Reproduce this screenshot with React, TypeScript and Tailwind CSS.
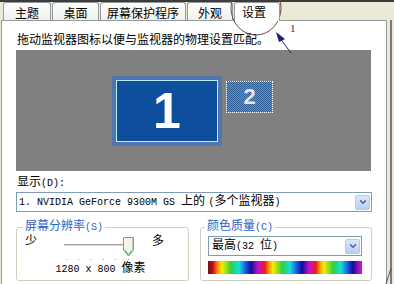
import React from 'react';
import { ChevronDown } from 'lucide-react';

const mono = "font-['Liberation_Mono','Noto_Sans_CJK_SC',monospace] text-[10px]";

const DropBtn: React.FC = () => (
  <div className="w-[15px] h-[15px] rounded-[2px] border border-[#b6c8f2] bg-[linear-gradient(#dbe6fd,#b9cdf8)] flex items-center justify-center">
    <ChevronDown className="w-[10px] h-[10px] text-[#4d6185]" strokeWidth={3.5} />
  </div>
);

const tabs = [
  { label: '主题', w: 'w-[48px]' },
  { label: '桌面', w: 'w-[47px]' },
  { label: '屏幕保护程序', w: 'w-[86px]' },
  { label: '外观', w: 'w-[46px]' },
];

export default function App() {
  return (
    <div className="relative w-[394px] h-[284px] overflow-hidden bg-[#ece9d8] flex flex-col text-[12px] text-black font-['Liberation_Sans','Noto_Sans_CJK_SC',sans-serif]">
      {/* window top edge */}
      <div className="h-[2px] bg-[#3c3c3c]" />

      {/* tab strip */}
      <div className="h-[18px] flex items-end pl-[3px]">
        {tabs.map((t) => (
          <div
            key={t.label}
            className={`${t.w} h-[18px] border-t border-l border-r border-[#919b9c] rounded-t-[3px] bg-[linear-gradient(#fefefe,#f1f0ea)] text-center pt-[5px] leading-[13px] mr-[1px]`}
          >
            {t.label}
          </div>
        ))}
        <div className="w-[46px] h-[19px] -mb-[1px] relative z-10 border-t border-l border-r border-[#919b9c] rounded-t-[3px] bg-white pl-[7px] pt-[3px] leading-[14px]">
          设置
        </div>
      </div>

      <div className="flex flex-1">
        {/* property page */}
        <div className="ml-[1px] w-[386px] bg-white border-l border-t border-r border-[#919b9c] pl-[14px] pr-[14px] pt-[12px] flex flex-col">
          <div className="leading-[14px] pl-[1px]">拖动监视器图标以便与监视器的物理设置匹配。</div>

          {/* monitor arrangement */}
          <div className="relative mt-[3px] h-[121px] w-[355px] bg-[#808080]">
            <div className="absolute left-[96px] top-[26px] w-[110px] h-[70px] bg-[#4f76ad] p-[4px]">
              <div className="w-full h-full border border-[#b8ecf8] bg-[#0d4f9c] flex items-center justify-center">
                <span className="text-white font-bold text-[50px] leading-none font-['Liberation_Sans',sans-serif]">1</span>
              </div>
            </div>
            <div className="absolute left-[210px] top-[31px] w-[47px] h-[32px] border border-dotted border-white bg-[repeating-conic-gradient(#2f5f96_0_25%,#8a8a8a_0_50%)] bg-[length:2px_2px] flex items-center justify-center">
              <span className="text-[#e2e6ee] font-bold text-[22px] leading-none font-['Liberation_Sans',sans-serif]">2</span>
            </div>
          </div>

          <div className="mt-[4px] leading-[14px] pl-[1px]">
            显示<span className={mono}>(D):</span>
          </div>

          <div className="mt-[1px] h-[20px] w-[356px] border border-[#7f9db9] flex items-center justify-between pl-[2px] pr-[1px]">
            <span className="leading-[14px] whitespace-nowrap">
              <span className={mono}>1. NVIDIA GeForce 9300M GS </span>上的 <span className={mono}>(</span>多个监视器<span className={mono}>)</span>
            </span>
            <DropBtn />
          </div>

          <div className="mt-[7px] flex gap-[11px]">
            <fieldset className="w-[173px] h-[62px] border border-[#d0d0bf] rounded-[3px] px-[8px]">
              <legend className="ml-[-2px] px-[2px] leading-[14px] text-[#2f62c6]">
                屏幕分辨率<span className={mono}>(S)</span>
              </legend>
              <div className="flex items-start">
                <span className="leading-[12px]">少</span>
                <svg width="72" height="26" className="ml-[25px] shrink-0">
                  <rect x="2" y="9" width="64" height="1" fill="#a09f98" />
                  <rect x="2" y="10" width="64" height="1" fill="#dcdcd4" />
                  {[4, 16, 28, 41, 53, 66].map((x) => (
                    <rect key={x} x={x} y="24" width="1" height="1" fill="#a0a0a0" />
                  ))}
                  <g transform="translate(61,2)">
                    <path d="M0.5 0.5 H10.5 V13 L5.5 19 L0.5 13 Z" fill="#f4f3ee" stroke="#8893a6" />
                    <path d="M1.5 13 L5.5 17.5 L9.5 13" fill="none" stroke="#3bb04c" />
                    <path d="M9.5 1.5 V12.5" stroke="#c9c9c0" />
                  </g>
                </svg>
                <span className="ml-[18px] leading-[12px]">多</span>
              </div>
              <div className="text-center leading-[14px] pr-[4px]">
                <span className={mono}>1280 x 800 </span>像素
              </div>
            </fieldset>

            <fieldset className="w-[172px] h-[62px] border border-[#d0d0bf] rounded-[3px] px-[7px]">
              <legend className="ml-[-3px] px-[2px] leading-[14px] text-[#2f62c6]">
                颜色质量<span className={mono}>(C)</span>
              </legend>
              <div className="mt-[1px] h-[20px] w-[154px] border border-[#7f9db9] flex items-center justify-between pl-[3px] pr-[1px]">
                <span className="leading-[14px]">
                  最高<span className={mono}>(32 </span>位<span className={mono}>)</span>
                </span>
                <DropBtn />
              </div>
              <div className="mt-[5px] h-[13px] w-[154px] bg-[linear-gradient(to_right,#7a1010_0px,#9a1818_4px,#ee1c1c_6px,#ff9a00_10px,#f5f000_14px,#30d040_23px,#10e0e0_31px,#2040e0_39px,#101090_43px,#c010d0_50px,#ee1c1c_57px,#ff9a00_61px,#f5f000_65px,#30d040_74px,#10e0e0_82px,#2040e0_90px,#101090_94px,#c010d0_101px,#ee1c1c_108px,#ff9a00_112px,#f5f000_116px,#30d040_125px,#10e0e0_133px,#2040e0_141px,#101090_145px,#c010d0_152px)]" />
            </fieldset>
          </div>
        </div>

        {/* window right edge */}
        <div className="w-[3px]" />
        <div className="w-[2px] bg-[#7a7a7a]" />
      </div>

      {/* hand-drawn annotation */}
      <svg className="absolute inset-0 pointer-events-none" width="394" height="284">
        <ellipse cx="256" cy="8" rx="25" ry="27" fill="none" stroke="#6b4a4a" strokeWidth="1" />
        <text x="290" y="32" fontSize="11" fill="#333" fontFamily="Liberation Serif, serif">1</text>
        <line x1="291" y1="53" x2="279" y2="37" stroke="#1a2370" strokeWidth="1" />
        <path d="M276 32 L285 39 L279 42 Z" fill="#1a2370" />
        <line x1="391" y1="268" x2="386" y2="284" stroke="#555" strokeWidth="1" />
      </svg>
    </div>
  );
}
